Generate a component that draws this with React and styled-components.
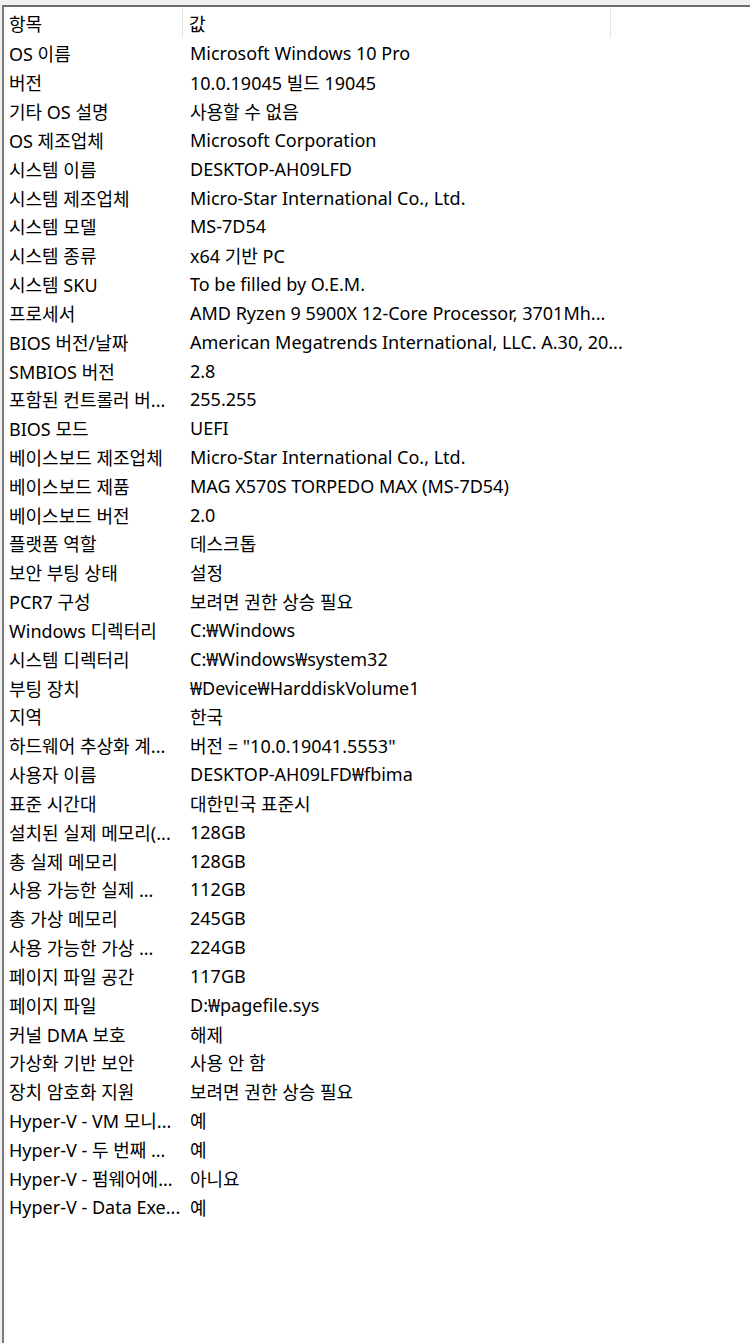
import React from 'react'
import styled, { createGlobalStyle } from 'styled-components';

const GlobalStyle = createGlobalStyle`
  html, body {
    margin: 0;
    padding: 0;
    background: #ffffff;
  }
  body {
    font-family: "Noto Sans", "Noto Sans CJK KR", sans-serif;
  }
`;

const Window = styled.div`
  width: 750px;
  height: 1343px;
  box-sizing: border-box;
  background: #f0f0f0;
  padding-top: 5px;
  padding-left: 2px;
  overflow: hidden;
`;

const ListView = styled.div`
  height: 100%;
  box-sizing: border-box;
  background: #ffffff;
  border-top: 2px solid #6e6e6e;
  border-left: 2px solid #7a7a7a;
`;

const HeaderRow = styled.div`
  display: grid;
  grid-template-columns: 179px 428px 1fr;
  height: 32px;
  align-items: center;
`;

const HeaderCell = styled.div`
  height: 30px;
  display: flex;
  align-items: center;
  padding-left: ${p => p.$pad || 5}px;
  font-size: 18px;
  color: #000;
  border-right: ${p => (p.$last ? 'none' : '1px solid #e5e5e5')};
`;

const Row = styled.div`
  display: grid;
  grid-template-columns: 179px 428px;
  height: 28.83px;
  align-items: center;
  font-size: 18px;
  color: #000;
  white-space: nowrap;
`;

const Cell = styled.div`
  padding-left: ${p => p.$pad || 5}px;
  overflow: ${p => (p.$free ? 'visible' : 'hidden')};
`;

const rows = [
  ['OS 이름', 'Microsoft Windows 10 Pro'],
  ['버전', '10.0.19045 빌드 19045'],
  ['기타 OS 설명', '사용할 수 없음'],
  ['OS 제조업체', 'Microsoft Corporation'],
  ['시스템 이름', 'DESKTOP-AH09LFD'],
  ['시스템 제조업체', 'Micro-Star International Co., Ltd.'],
  ['시스템 모델', 'MS-7D54'],
  ['시스템 종류', 'x64 기반 PC'],
  ['시스템 SKU', 'To be filled by O.E.M.'],
  ['프로세서', 'AMD Ryzen 9 5900X 12-Core Processor, 3701Mh...'],
  ['BIOS 버전/날짜', 'American Megatrends International, LLC. A.30, 20...'],
  ['SMBIOS 버전', '2.8'],
  ['포함된 컨트롤러 버...', '255.255'],
  ['BIOS 모드', 'UEFI'],
  ['베이스보드 제조업체', 'Micro-Star International Co., Ltd.'],
  ['베이스보드 제품', 'MAG X570S TORPEDO MAX (MS-7D54)'],
  ['베이스보드 버전', '2.0'],
  ['플랫폼 역할', '데스크톱'],
  ['보안 부팅 상태', '설정'],
  ['PCR7 구성', '보려면 권한 상승 필요'],
  ['Windows 디렉터리', 'C:\\Windows'],
  ['시스템 디렉터리', 'C:\\Windows\\system32'],
  ['부팅 장치', '\\Device\\HarddiskVolume1'],
  ['지역', '한국'],
  ['하드웨어 추상화 계...', '버전 = "10.0.19041.5553"'],
  ['사용자 이름', 'DESKTOP-AH09LFD\\fbima'],
  ['표준 시간대', '대한민국 표준시'],
  ['설치된 실제 메모리(...', '128GB'],
  ['총 실제 메모리', '128GB'],
  ['사용 가능한 실제 ...', '112GB'],
  ['총 가상 메모리', '245GB'],
  ['사용 가능한 가상 ...', '224GB'],
  ['페이지 파일 공간', '117GB'],
  ['페이지 파일', 'D:\\pagefile.sys'],
  ['커널 DMA 보호', '해제'],
  ['가상화 기반 보안', '사용 안 함'],
  ['장치 암호화 지원', '보려면 권한 상승 필요'],
  ['Hyper-V - VM 모니...', '예'],
  ['Hyper-V - 두 번째 ...', '예'],
  ['Hyper-V - 펌웨어에...', '아니요'],
  ['Hyper-V - Data Exe...', '예'],
];

// the list view shows the backslash as a won sign
const won = s => s.replace(/\\/g, '₩');

export default function App() {
  return (
    <>
      <GlobalStyle />
      <Window>
        <ListView>
          <HeaderRow>
            <HeaderCell>항목</HeaderCell>
            <HeaderCell $pad={6}>값</HeaderCell>
            <HeaderCell $last />
          </HeaderRow>
          {rows.map(([k, v], i) => (
            <Row key={i}>
              <Cell>{k}</Cell>
              <Cell $pad={7} $free>{won(v)}</Cell>
            </Row>
          ))}
        </ListView>
      </Window>
    </>
  )
}
